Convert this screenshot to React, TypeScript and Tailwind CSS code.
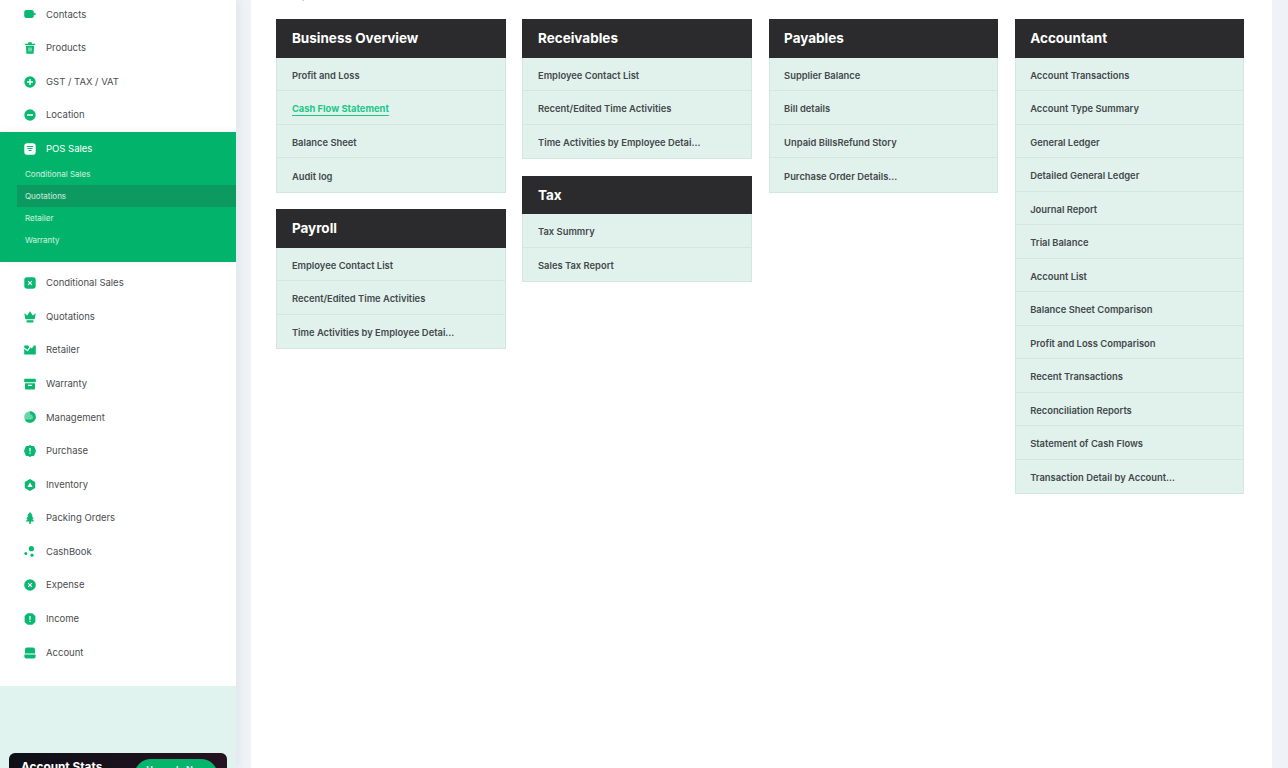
import type { ReactNode } from "react";

type NavItem = { label: string; icon: ReactNode };

const Icon = ({ children }: { children: ReactNode }) => (
  <svg viewBox="0 0 12 12" className="h-3 w-3 shrink-0 fill-current">
    {children}
  </svg>
);

const white = "#fff";

const topItems: NavItem[] = [
  {
    label: "Contacts",
    icon: (
      <Icon>
        <rect x="0.2" y="2" width="9.6" height="8" rx="2" />
        <path d="M9.5 4.4 11.8 5.6v.8L9.5 7.6z" />
      </Icon>
    ),
  },
  {
    label: "Products",
    icon: (
      <Icon>
        <path d="M4.4 0.2h3.2l.5 1.5h3v1.3H.9V1.7h3zM1.9 3.8h8.2l-.5 8H2.4zM4.6 5.6v3.8h.8V5.6zM6.6 5.6v3.8h.8V5.6z" fillRule="evenodd" />
      </Icon>
    ),
  },
  {
    label: "GST / TAX / VAT",
    icon: (
      <Icon>
        <circle cx="6" cy="6" r="5.7" />
        <path d="M5.3 3h1.4v2.3H9v1.4H6.7V9H5.3V6.7H3V5.3h2.3z" fill={white} />
      </Icon>
    ),
  },
  {
    label: "Location",
    icon: (
      <Icon>
        <circle cx="6" cy="6" r="5.7" />
        <rect x="3" y="5.3" width="6" height="1.4" fill={white} />
      </Icon>
    ),
  },
];

const bottomItems: NavItem[] = [
  {
    label: "Conditional Sales",
    icon: (
      <Icon>
        <rect x="0.3" y="0.3" width="11.4" height="11.4" rx="2.4" />
        <path d="M4.5 3.7 6 5.2l1.5-1.5.8.8L6.8 6l1.5 1.5-.8.8L6 6.8 4.5 8.3l-.8-.8L5.2 6 3.7 4.5z" fill={white} />
      </Icon>
    ),
  },
  {
    label: "Quotations",
    icon: (
      <Icon>
        <path d="M.2 2.2 3.2 4.4 6 .2l2.8 4.2 3-2.2-1.2 6H1.4zM2.6 9.2h6.8v2.2H2.6z" />
      </Icon>
    ),
  },
  {
    label: "Retailer",
    icon: (
      <Icon>
        <path d="M.2 1.6h4L5.4 3 3.4 5.8.2 3.4zM.2 4.8 3.7 7.5 6.6 3.3l1.2 1.3L10 1.4h1.8V10.4H.2z" />
      </Icon>
    ),
  },
  {
    label: "Warranty",
    icon: (
      <Icon>
        <rect x="0.2" y="0.8" width="11.6" height="3.4" rx="0.6" />
        <path d="M1 5.2h10v5.2a1.2 1.2 0 0 1-1.2 1.2H2.2A1.2 1.2 0 0 1 1 10.4zM4 6.8v1.3h4V6.8z" fillRule="evenodd" />
      </Icon>
    ),
  },
  {
    label: "Management",
    icon: (
      <Icon>
        <circle cx="6" cy="6" r="5.8" opacity="0.6" />
        <path d="M6 .2a5.8 5.8 0 0 1 0 11.6 5.8 5.8 0 0 1-5.2-3.2L6.6 8.6A2.6 2.6 0 0 0 6 3.4z" />
      </Icon>
    ),
  },
  {
    label: "Purchase",
    icon: (
      <Icon>
        <path d="M6 0 7.8 1.1 9.9 1.1 10.9 3 12 6 10.9 9 9.9 10.9 7.8 10.9 6 12 4.2 10.9 2.1 10.9 1.1 9 0 6 1.1 3 2.1 1.1 4.2 1.1z" />
        <path d="M5.4 3h1.2v3.6H5.4zM5.4 7.6h1.2v1.2H5.4z" fill={white} />
      </Icon>
    ),
  },
  {
    label: "Inventory",
    icon: (
      <Icon>
        <path d="M6 0 11.2 3v6L6 12 .8 9V3z" />
        <path d="M6 3.4 8.6 8H3.4z" fill={white} />
      </Icon>
    ),
  },
  {
    label: "Packing Orders",
    icon: (
      <Icon>
        <path d="M6 0 8.8 3.6H7.6l2.2 3.2H8.2L10.4 9.4H6.8V12H5.2V9.4H1.6L3.8 6.8H2.2l2.2-3.2H3.2z" />
      </Icon>
    ),
  },
  {
    label: "CashBook",
    icon: (
      <Icon>
        <circle cx="7.4" cy="2.7" r="2.6" />
        <circle cx="1.8" cy="7.6" r="1.5" />
        <circle cx="8" cy="9.2" r="1.6" />
      </Icon>
    ),
  },
  {
    label: "Expense",
    icon: (
      <Icon>
        <circle cx="6" cy="6" r="5.8" />
        <path d="M4.5 3.7 6 5.2l1.5-1.5.8.8L6.8 6l1.5 1.5-.8.8L6 6.8 4.5 8.3l-.8-.8L5.2 6 3.7 4.5z" fill={white} />
      </Icon>
    ),
  },
  {
    label: "Income",
    icon: (
      <Icon>
        <path d="M3.6.2h4.8L11.4 3v6L8.4 11.8H3.6L.6 9V3z" />
        <path d="M5.4 3h1.2v3.8H5.4zM5.4 7.8h1.2V9H5.4z" fill={white} />
      </Icon>
    ),
  },
  {
    label: "Account",
    icon: (
      <Icon>
        <path d="M3 .4h6a2 2 0 0 1 2 2v4.2H1V2.4a2 2 0 0 1 2-2zM.4 7.4h11.2v2.4a1.8 1.8 0 0 1-1.8 1.8H2.2A1.8 1.8 0 0 1 .4 9.8z" />
      </Icon>
    ),
  },
];

const subItems = ["Conditional Sales", "Quotations", "Retailer", "Warranty"];

type Section = { title: string; links: string[]; active?: string };

const columns: Section[][] = [
  [
    {
      title: "Business Overview",
      links: ["Profit and Loss", "Cash Flow Statement", "Balance Sheet", "Audit log"],
      active: "Cash Flow Statement",
    },
    {
      title: "Payroll",
      links: ["Employee Contact List", "Recent/Edited Time Activities", "Time Activities by Employee Detai..."],
    },
  ],
  [
    {
      title: "Receivables",
      links: ["Employee Contact List", "Recent/Edited Time Activities", "Time Activities by Employee Detai..."],
    },
    { title: "Tax", links: ["Tax Summry", "Sales Tax Report"] },
  ],
  [
    {
      title: "Payables",
      links: ["Supplier Balance", "Bill details", "Unpaid BillsRefund Story", "Purchase Order Details..."],
    },
  ],
  [
    {
      title: "Accountant",
      links: [
        "Account Transactions",
        "Account Type Summary",
        "General Ledger",
        "Detailed General Ledger",
        "Journal Report",
        "Trial Balance",
        "Account List",
        "Balance Sheet Comparison",
        "Profit and Loss Comparison",
        "Recent Transactions",
        "Reconciliation Reports",
        "Statement of Cash Flows",
        "Transaction Detail by Account...",
      ],
    },
  ],
];

function NavRow({ item }: { item: NavItem }) {
  return (
    <a className="flex h-[33.6px] items-center gap-[10.5px] pl-[23.5px] pt-[1px] text-[9.5px] text-[#4a4d50]">
      <span className="-mt-[0.5px] text-[#0ab872]">{item.icon}</span>
      {item.label}
    </a>
  );
}

function Card({ section }: { section: Section }) {
  return (
    <div className="w-[229.5px]">
      <h3 className="flex h-[38.5px] items-center bg-[#2b2b2d] pl-[15.5px] text-[13.5px] font-bold text-white">
        {section.title}
      </h3>
      <ul className="border-x border-b border-[#d3e7e1] bg-[#e1f2ed]">
        {section.links.map((link) => (
          <li
            key={link}
            className="flex h-[33.5px] items-center border-b border-[#d3e7e1] pl-[14.5px] pt-[4px] text-[9.4px] font-semibold text-[#44484b] last:border-b-0"
          >
            {link === section.active ? (
              <span className="border-b border-[#1cc888] font-bold leading-[12px] text-[#1cc888]">{link}</span>
            ) : (
              link
            )}
          </li>
        ))}
      </ul>
    </div>
  );
}

export default function App() {
  return (
    <div className="flex h-[768px] overflow-hidden bg-[#eff3f8] font-['Inter',sans-serif]">
      <aside className="relative flex w-[236px] shrink-0 flex-col overflow-hidden bg-white shadow-[3px_0_8px_rgba(120,130,160,0.12)]">
        <nav className="-mt-[2.6px] pb-[17px]">
          {topItems.map((item) => (
            <NavRow key={item.label} item={item} />
          ))}
          <div className="mb-[3.6px] h-[130.6px] bg-[#02b46b] shadow-[0_0_8px_rgba(0,0,0,0.06)]">
            <a className="flex h-[33.6px] items-center gap-[10.5px] pl-[23.5px] pt-[1px] text-[9.5px] text-white">
              <Icon>
                <rect x="0.3" y="0.3" width="11.4" height="11.4" rx="2.8" />
                <path d="M2.8 3h6.4v1H2.8zM3.5 5h5v1h-5zM4.5 7h3v1h-3z" fill="#02b46b" />
              </Icon>
              POS Sales
            </a>
            <ul className="-mt-[2.2px]">
              {subItems.map((sub) => (
                <li
                  key={sub}
                  className={
                    sub === "Quotations"
                      ? "ml-[17px] flex h-[22px] items-center bg-[#0c9a61] pl-[8px] text-[8px] text-white/80"
                      : "ml-[17px] flex h-[22px] items-center pl-[8px] text-[8px] text-white/80"
                  }
                >
                  {sub}
                </li>
              ))}
            </ul>
          </div>
          {bottomItems.map((item) => (
            <NavRow key={item.label} item={item} />
          ))}
        </nav>
        <div className="flex-1 bg-[#e1f3ee] px-[9px] pt-[67px]">
          <div className="flex h-[60px] items-start justify-between rounded-t-[6px] bg-linear-to-r from-[#0d0f17] to-[#251320] pl-[12px] pr-[9px] pt-[6px]">
            <span className="text-[11.8px] font-bold text-white">Account Stats</span>
            <button className="h-[34px] w-[84px] rounded-full bg-[#06b56c] text-[9px] font-semibold text-white">
              <span className="relative -top-[6px]">Upgrade Now</span>
            </button>
          </div>
        </div>
      </aside>
      <main className="ml-[15px] mr-[16px] flex-1 bg-white pl-[25.4px]">
        <p className="-mt-[10px] h-[29px] pl-[14px] text-[9.5px] leading-[12px] text-[#888]">Reports</p>
        <div className="flex items-start gap-[16.6px]">
          {columns.map((col) => (
            <div key={col[0].title} className="flex flex-col gap-[16.5px]">
              {col.map((section) => (
                <Card key={section.title} section={section} />
              ))}
            </div>
          ))}
        </div>
      </main>
    </div>
  );
}
